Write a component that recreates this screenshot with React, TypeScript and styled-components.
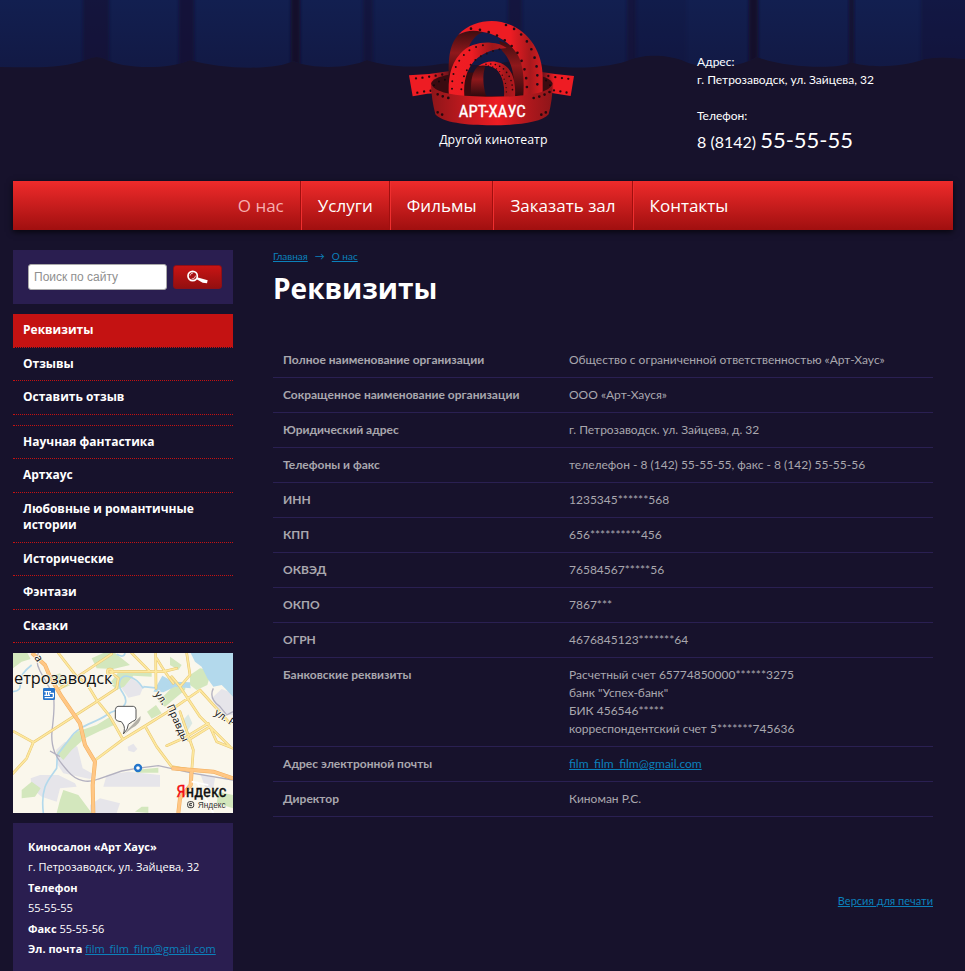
import React from "react";
import styled, { createGlobalStyle, css } from "styled-components";

const openSans = `"Open Sans", "Noto Sans", sans-serif`;
const lato = `Lato, "Open Sans", sans-serif`;
const narrow = `"Liberation Sans Narrow", "Roboto Condensed", "Liberation Sans", sans-serif`;

const GlobalStyle = createGlobalStyle`
  * { box-sizing: border-box; }
  body {
    margin: 0;
    background: #17122c;
    color: #fff;
    font-family: ${lato};
    font-size: 12px;
    line-height: 18px;
  }
`;

const Page = styled.div`
  display: flex;
  flex-direction: column;
`;

const Header = styled.header`
  display: grid;
  min-height: 181px;
`;

const CurtainArt = styled.svg`
  grid-area: 1 / 1;
  display: block;
  width: 100%;
  height: 72px;
`;

const HeaderInner = styled.div`
  grid-area: 1 / 1;
  display: grid;
  grid-template-columns: minmax(0, 387fr) 190px minmax(0, 363fr);
  padding: 0 12px 0 13px;
`;

const LogoLink = styled.a`
  grid-column: 2;
  padding-top: 10px;
`;

const LogoArt = styled.svg`
  display: block;
  width: 190px;
  height: 145px;
`;

const Contacts = styled.address`
  grid-column: 3;
  padding: 53px 0 0 107px;
  font-style: normal;
`;

const ContactBlock = styled.p`
  margin: 0 0 18px;
`;

const Phone = styled.span`
  display: block;
  font-size: 16px;
  line-height: 30px;
`;

const PhoneNumber = styled.span`
  font-size: 22px;
`;

const Nav = styled.nav`
  display: flex;
  justify-content: center;
  margin: 0 12px 0 13px;
  height: 49px;
  background: linear-gradient(#ef2b2b, #a00f0f);
  box-shadow: 0 2px 6px rgba(0, 0, 0, 0.7);
`;

const NavLink = styled.a<{ $current?: boolean }>`
  padding: 0 16px;
  color: ${(p) => (p.$current ? "#f7b0b0" : "#fff")};
  font-family: ${openSans};
  font-size: 17px;
  font-weight: 500;
  line-height: 50px;
  text-decoration: none;
  & + & {
    border-left: 1px solid #ef2f2f;
  }
  &:not(:last-child) {
    border-right: 1px solid #a00f0f;
  }
`;

const Columns = styled.div`
  display: grid;
  grid-template-columns: 220px minmax(0, 1fr);
  column-gap: 40px;
  padding: 20px 32px 0 13px;
`;

const Sidebar = styled.aside`
  display: flex;
  flex-direction: column;
  gap: 10px;
`;

const SearchForm = styled.form`
  display: flex;
  align-items: center;
  gap: 6px;
  height: 54px;
  padding: 0 11px 0 15px;
  background: #2a1e50;
`;

const SearchInput = styled.input`
  flex: 1;
  min-width: 0;
  height: 26px;
  padding: 0 5px;
  border: 1px solid #a9a9a9;
  border-radius: 3px;
  background: #fff;
  color: #333;
  font-family: "Liberation Sans", Arial, sans-serif;
  font-size: 12px;
  &::placeholder {
    color: #8f8f8f;
    opacity: 1;
  }
`;

const SearchButton = styled.button`
  display: flex;
  align-items: center;
  justify-content: center;
  width: 49px;
  height: 24px;
  padding: 0;
  border: 1px solid #8d0f18;
  border-radius: 3px;
  background: linear-gradient(#c81414, #930f10);
`;

const Menu = styled.ul<{ $ruled?: boolean }>`
  margin: 0;
  padding: 0;
  list-style: none;
  ${(p) =>
    p.$ruled &&
    css`
      border-top: 1px dotted #c41212;
    `}
`;

const MenuLink = styled.a<{ $current?: boolean }>`
  display: block;
  padding: 8px 10px;
  border-bottom: 1px dotted #c41212;
  background: ${(p) => (p.$current ? "#c41212" : "transparent")};
  background-clip: padding-box;
  color: #fff;
  font-family: ${openSans};
  font-size: 12px;
  font-weight: 700;
  line-height: 1.375;
  text-decoration: none;
`;

const MapArt = styled.svg`
  display: block;
  width: 220px;
  height: 160px;
`;

const InfoCard = styled.div`
  min-height: 148px;
  padding: 14px 15px 12px;
  background: #2a1e50;
  font-family: ${openSans};
  font-size: 11px;
`;

const InfoLine = styled.p`
  margin: 0;
  line-height: 1.86;
  white-space: nowrap;
`;

const Link = styled.a`
  color: #0b80bb;
  text-decoration: underline;
`;

const Content = styled.main`
  display: flex;
  flex-direction: column;
`;

const Breadcrumbs = styled.nav`
  display: flex;
  gap: 7px;
  color: #0b80bb;
  font-size: 10px;
  line-height: 12px;
`;

const Title = styled.h1`
  margin: 6px 0 35px;
  font-family: ${openSans};
  font-size: 28px;
  font-weight: 700;
  line-height: 40px;
`;

const Details = styled.table`
  width: 100%;
  border-collapse: collapse;
  table-layout: fixed;
  color: #a9a7ae;
  th,
  td {
    padding: 8px 10px;
    border-bottom: 1px solid #2a2052;
    text-align: left;
    vertical-align: top;
    white-space: pre-line;
  }
  th {
    width: 286px;
    font-weight: 700;
  }
`;

const PrintRow = styled.div`
  display: flex;
  justify-content: flex-end;
  margin-top: 75px;
  font-size: 11px;
`;

const folds: [number, number, string, number][] = [
  [83, 26, "#15112f", 0.55],
  [179, 15, "#15112f", 0.65],
  [291, 9, "#120e28", 0.85],
  [363, 10, "#15112f", 0.45],
  [508, 14, "#15112f", 0.5],
  [627, 9, "#15112f", 0.5],
  [636, 50, "#15112f", 0.12],
  [749, 9, "#120e28", 0.85],
  [849, 5, "#120e28", 0.7],
  [921, 48, "#15112f", 0.35],
];

function Curtain() {
  return (
    <CurtainArt viewBox="0 0 965 72" preserveAspectRatio="none" aria-hidden="true">
      <defs>
        <linearGradient id="cloth" x1="0" y1="0" x2="0" y2="1">
          <stop offset="0" stopColor="#121f50" />
          <stop offset="1" stopColor="#121944" />
        </linearGradient>
        <filter id="soft" x="-40%" width="180%">
          <feGaussianBlur stdDeviation="1.5 0" />
        </filter>
        <clipPath id="hem">
          <path d="M0 0H965V59Q940 56 925 59C900 68 865 68 851 62C840 70 785 68 757 57C735 70 700 68 686 62C665 53 640 55 627 61C600 70 560 68 545 65C530 60 515 60 500 63C470 68 460 62 440 64C410 69 385 66 367 60C350 68 315 70 293 61C275 71 220 69 190 60C165 71 120 68 105 59Q97 55 88 59C60 70 30 67 0 67Z" />
        </clipPath>
      </defs>
      <g clipPath="url(#hem)">
        <rect width="965" height="72" fill="url(#cloth)" />
        {folds.map(([x, w, fill, opacity]) => (
          <rect key={x} x={x} y="-4" width={w} height="80" fill={fill} opacity={opacity} filter="url(#soft)" />
        ))}
      </g>
    </CurtainArt>
  );
}

function Logo() {
  return (
    <LogoArt viewBox="0 0 570 435" role="img" aria-label="Арт-Хаус. Другой кинотеатр">
      <defs>
        <linearGradient id="shade" x1="0" y1="0" x2="0" y2="1">
          <stop offset="0" stopColor="#3d0d10" />
          <stop offset=".45" stopColor="#8f181b" />
          <stop offset="1" stopColor="#320a0e" />
        </linearGradient>
        <linearGradient id="big" x1="0" x2="1">
          <stop offset="0" stopColor="#ee1c23" />
          <stop offset=".62" stopColor="#ee1c23" />
          <stop offset=".85" stopColor="#a8181c" />
          <stop offset="1" stopColor="#d81c22" />
        </linearGradient>
        <linearGradient id="mid" x1="0" x2="1">
          <stop offset="0" stopColor="#f01d24" />
          <stop offset=".4" stopColor="#ee1c23" />
          <stop offset=".75" stopColor="#9d171b" />
          <stop offset="1" stopColor="#b5191e" />
        </linearGradient>
        <linearGradient id="band" x1="0" x2="1">
          <stop offset="0" stopColor="#8d1519" />
          <stop offset=".28" stopColor="#c0191e" />
          <stop offset=".55" stopColor="#ee1c23" />
          <stop offset=".78" stopColor="#b3181d" />
          <stop offset="1" stopColor="#8d1519" />
        </linearGradient>
        <linearGradient id="wingL" x1="0" x2="1">
          <stop offset=".5" stopColor="#ee1c23" />
          <stop offset="1" stopColor="#65121a" />
        </linearGradient>
        <linearGradient id="wingR" x1="0" x2="1">
          <stop offset="0" stopColor="#65121a" />
          <stop offset=".4" stopColor="#ee1c23" />
        </linearGradient>
      </defs>
      <path d="M27 196Q90 194 150 183V250Q100 245 38 259Z" fill="url(#wingL)" />
      <path d="M425 186Q470 194 522 198L512 258Q470 252 425 244Z" fill="url(#wingR)" />
      <path d="M93 222C97 196 170 187 275 187S453 196 458 222C450 252 370 266 275 266S103 254 93 222Z" fill="#3a0b10" />
      <path d="M258 258C240 225 240 190 258 170C290 165 316 200 312 258Z" fill="#17122c" />
      <path d="M147 210C143 135 152 100 175 74C200 60 228 60 250 66C228 74 212 92 204 118L160 200Z" fill="url(#shade)" />
      <path d="M298 92L306 122C328 145 344 175 345 258H372V180L352 125Q330 100 298 92Z" fill="url(#shade)" />
      <path d="M175 74C203 45 240 33 275 33C372 36 428 115 428 200V258H370C373 205 370 160 350 130C328 95 285 70 245 65C218 60 198 62 175 74Z" fill="url(#big)" />
      <path d="M147 260C143 210 150 165 180 132C205 104 240 96 272 98C292 99 308 104 320 114C290 117 252 122 222 154C200 180 190 212 193 260Z" fill="url(#mid)" />
      <path d="M213 258C213 224 211 193 232 170Q242 164 256 169C246 195 250 230 258 258Z" fill="url(#shade)" />
      <path d="M235 168C252 154 280 150 302 159C338 174 348 215 345 260H312C316 215 301 176 270 169Q250 165 235 168Z" fill="url(#mid)" />
      <g fill="none" stroke="#26090f" strokeWidth="8" strokeLinecap="round">
        <path d="M318 45C375 65 408 125 412 190V240" strokeDasharray="0 27" stroke="#1a0c18" />
        <path d="M213 56C275 60 325 90 352 128C373 162 380 195 381 240" strokeDasharray="0 27" />
        <path d="M156 236C155 190 170 150 203 125Q225 106 265 104" strokeDasharray="0 22" strokeWidth="6" />
        <path d="M184 238C186 195 208 160 240 140Q270 124 308 115" strokeDasharray="0 20" strokeWidth="6" />
        <path d="M258 163Q300 157 322 190Q340 215 337 250" strokeDasharray="0 14" strokeWidth="5" />
        <path d="M265 168Q294 171 308 198Q320 220 319 250" strokeDasharray="0 13" strokeWidth="4" />
        <path d="M48 205Q90 201 140 191" strokeDasharray="0 20" strokeWidth="7" />
        <path d="M52 248Q75 243 96 242" strokeDasharray="0 20" strokeWidth="7" />
        <path d="M445 198Q480 204 510 207" strokeDasharray="0 20" strokeWidth="7" />
        <path d="M462 241Q485 244 506 249" strokeDasharray="0 19" strokeWidth="7" />
        <path d="M102 226Q108 214 145 207M450 226Q445 214 430 207" strokeDasharray="0 19" strokeWidth="6" stroke="#16060b" />
      </g>
      <path d="M93 222C106 252 180 260 275 260S447 252 458 222C458 255 453 285 446 313C425 338 350 346 275 346S126 338 106 313C98 280 94 255 93 222Z" fill="url(#band)" />
      <g fill="none" stroke="#24090e" strokeWidth="8" strokeLinecap="round">
        <path d="M113 253Q130 261 151 265M401 264Q430 258 450 245" strokeDasharray="0 17" />
        <path d="M113 307L127 314M424 314L438 307" strokeDasharray="0 15" />
      </g>
      <text x="277" y="322" textAnchor="middle" fill="#fff" stroke="#fff" strokeWidth="1" fontFamily={narrow} fontSize="50">АРТ-ХАУС</text>
      <text x="280" y="402" textAnchor="middle" fill="#fff" fontFamily={`"Open Sans", sans-serif`} fontSize="37">Другой кинотеатр</text>
    </LogoArt>
  );
}

function MagnifierIcon() {
  return (
    <svg width="21" height="14" viewBox="0 0 63 42" aria-hidden="true">
      <circle cx="17" cy="18" r="14" fill="#a91215" stroke="#fff" strokeWidth="5" />
      <path d="M9 17Q11 9 18 9M14 27Q24 27 26 17" fill="none" stroke="#fff" strokeWidth="3" opacity=".7" />
      <path d="M30 22L62 31L60 40L47 38L29 28Z" fill="#fff" />
    </svg>
  );
}

function CityMap() {
  const water = "#b3d9ec";
  const green = "#d3e7bd";
  const grey = "#e6e5ea";
  return (
    <MapArt viewBox="39 24 660 480" role="img" aria-label="Карта проезда">
      <rect x="39" y="24" width="660" height="480" fill="#faf7ec" />
      <g fill={grey}>
        <path d="M365 130L395 100L430 125L420 150L385 158Z" />
        <path d="M168 315L195 290L232 305L248 370L285 390L270 402L190 385L170 355Z" />
        <path d="M92 400L120 390L175 390L225 415L230 425L180 430L170 470L125 455L95 430Z" />
        <path d="M320 390L385 380L480 390L480 425L310 425Z" />
        <path d="M635 160L665 132L699 145V210H665Z" />
        <path d="M300 460L360 475L350 504H270V480Z" />
        <path d="M383 305L400 296L412 312L402 322L385 317ZM600 385L645 400L640 430L615 425Z" />
      </g>
      <g fill={green}>
        <path d="M39 24H82L92 42L65 50L39 70ZM150 95L180 85L212 120L190 130L170 115Z" />
        <path d="M275 40L310 24H345L390 60L340 72L290 70ZM360 75H455V95L400 92L372 125L350 135L330 115Z" />
        <path d="M475 170L515 128L560 110L555 135L495 185ZM510 35L545 60L535 75L510 60Z" />
        <path d="M570 90L600 70L635 75L622 120L590 135L570 120Z" />
        <path d="M190 300L230 260L290 240L330 215L342 240L300 258L255 280L215 315L190 345L170 325Z" />
        <path d="M441 200L468 180L485 205L455 221Z" />
        <path d="M65 435L95 410L122 430L105 455L65 460ZM190 435L235 450L275 504H170L180 465Z" />
        <path d="M405 375L475 368V383H410ZM655 440L699 450V490L650 475ZM405 500L425 485H445V504Z" />
      </g>
      <path d="M572 24H699V155L675 130L665 120L640 125L622 100L605 65L585 50Z" fill={water} />
      <path d="M487 92L520 110L570 112L572 130L525 125L490 142L460 140Z" fill={water} />
      <path d="M430 125L480 130L510 120M375 24Q372 40 350 28M430 130C405 90 360 80 358 115C355 140 385 150 376 175C365 200 345 190 320 210C285 235 235 240 210 280L172 330L170 370C150 400 120 420 130 504M39 140Q65 138 60 115T95 60" fill="none" stroke={water} strokeWidth="5" />
      <path d="M115 24Q105 50 120 78L160 150Q165 180 158 240C145 320 180 350 205 380C230 410 265 415 295 402L365 378L410 370L475 362L580 385L699 405M640 130Q625 160 660 185L680 210L699 200M150 318L180 335" fill="none" stroke="#b3b1c0" strokeWidth="4" />
      <path d="M545 230L565 208L577 235L560 262Z" fill="#dae8e3" />
      <g fill="none" strokeLinejoin="round" strokeLinecap="round">
        {[{ c: "#e8c66f", w: 8 }, { c: "#fde89f", w: 5 }].map((s) => (
          <g key={s.c} stroke={s.c} strokeWidth={s.w}>
            <path d="M175 24L230 95L260 115L290 165L330 215L368 282M335 27L180 130M330 80L355 100L350 130L290 170L240 202L100 292L42 260M100 292L80 340L39 385M330 80H490L530 70M395 24L450 80M467 24L468 130M290 342L368 284L435 243L520 190L600 135L690 235M435 243L470 305L515 365L575 375M540 125L570 90L560 24M515 95L540 125L600 215L690 305M625 235L560 275L500 302M565 285L630 245L650 290L699 310M470 40Q500 90 520 115M540 200L580 315L575 380" />
            <circle cx="330" cy="80" r="8" />
          </g>
        ))}
      </g>
      <g fill="none" strokeLinejoin="round">
        {[{ c: "#f2ae5c", w: 12 }, { c: "#ffc785", w: 9 }].map((s) => (
          <path key={s.c} stroke={s.c} strokeWidth={s.w} d="M96 24L135 60L150 95L185 155L240 235L255 300L285 350L278 420L280 504M515 370L640 380L699 400M575 375L572 420L540 460L535 504" />
        ))}
      </g>
      <path d="M575 410L625 420M590 410L640 504" stroke="#fff" strokeWidth="5" />
      <g fontFamily={openSans} fill="#111" stroke="#faf7ec" strokeWidth="5" paintOrder="stroke">
        <text x="42" y="118" fontSize="49">етрозаводск</text>
        <text x="0" y="0" fontSize="33" transform="translate(102 38) rotate(55)">а</text>
        <text fontSize="31" transform="translate(463 148) rotate(53)">ул.</text>
        <text fontSize="31" transform="translate(500 184) rotate(66)">Правды</text>
        <text fontSize="31" transform="translate(641 208) rotate(33)">ул. Р</text>
      </g>
      <rect x="129" y="129" width="36" height="36" rx="4" fill="#2574cc" />
      <path d="M133 140H153M139 140V150M146 140V150M133 151H150M150 145H160V157M134 158H160" fill="none" stroke="#fff" strokeWidth="4" />
      <path d="M385 252L422 213Q424 235 395 250L373 268Z" fill="#77756d" opacity=".55" />
      <path d="M354 184H400Q408 185 408 194V220Q407 228 398 229L385 238Q385 252 370 267Q377 248 369 237L364 230Q348 229 346 220V194Q347 185 354 184Z" fill="#fff" stroke="#555" strokeWidth="3" />
      <circle cx="414" cy="369" r="9" fill="#fff" stroke="#2375ca" strokeWidth="7" />
      <text x="529" y="456" fontFamily={narrow} fontSize="50" fill="#111" stroke="#111" strokeWidth="1"><tspan fill="#f20f12" stroke="#f20f12">Я</tspan>ндекс</text>
      <text x="593" y="489" fontFamily={`"Liberation Sans", sans-serif`} fontSize="25" fill="#333">Яндекс</text>
      <rect x="563" y="470" width="18" height="18" rx="6" fill="#faf7ec" stroke="#333" strokeWidth="3" />
      <path d="M576 476H569V482H576" fill="none" stroke="#333" strokeWidth="3" />
    </MapArt>
  );
}

const navItems = ["О нас", "Услуги", "Фильмы", "Заказать зал", "Контакты"];
const aboutMenu = ["Реквизиты", "Отзывы", "Оставить отзыв"];
const genreMenu = ["Научная фантастика", "Артхаус", "Любовные и романтичные истории", "Исторические", "Фэнтази", "Сказки"];
const email = "film_film_film@gmail.com";

const rows: [string, React.ReactNode][] = [
  ["Полное наименование организации", "Общество с ограниченной ответственностью «Арт-Хаус»"],
  ["Сокращенное наименование организации", "ООО «Арт-Хауся»"],
  ["Юридический адрес", "г. Петрозаводск. ул. Зайцева, д. 32"],
  ["Телефоны и факс", "телелефон - 8 (142) 55-55-55, факс - 8 (142) 55-55-56"],
  ["ИНН", "1235345******568"],
  ["КПП", "656**********456"],
  ["ОКВЭД", "76584567*****56"],
  ["ОКПО", "7867***"],
  ["ОГРН", "4676845123*******64"],
  ["Банковские реквизиты", "Расчетный счет 65774850000******3275\nбанк \"Успех-банк\"\nБИК 456546*****\nкорреспондентский счет 5*******745636"],
  ["Адрес электронной почты", <Link href={`mailto:${email}`}>{email}</Link>],
  ["Директор", "Киноман Р.С."],
];

export default function App() {
  return (
    <Page>
      <GlobalStyle />
      <Header>
        <Curtain />
        <HeaderInner>
          <LogoLink href="#home">
            <Logo />
          </LogoLink>
          <Contacts>
            <ContactBlock>
              Адрес:
              <br />
              г. Петрозаводск, ул. Зайцева, 32
            </ContactBlock>
            <ContactBlock>
              Телефон:
              <Phone>
                8 (8142) <PhoneNumber>55-55-55</PhoneNumber>
              </Phone>
            </ContactBlock>
          </Contacts>
        </HeaderInner>
      </Header>
      <Nav>
        {navItems.map((item, i) => (
          <NavLink key={item} href="#section" $current={i === 0}>
            {item}
          </NavLink>
        ))}
      </Nav>
      <Columns>
        <Sidebar>
          <SearchForm onSubmit={(e) => e.preventDefault()}>
            <SearchInput type="text" placeholder="Поиск по сайту" aria-label="Поиск по сайту" />
            <SearchButton type="submit" aria-label="Найти">
              <MagnifierIcon />
            </SearchButton>
          </SearchForm>
          <Menu>
            {aboutMenu.map((item, i) => (
              <li key={item}>
                <MenuLink href="#page" $current={i === 0}>{item}</MenuLink>
              </li>
            ))}
          </Menu>
          <Menu $ruled>
            {genreMenu.map((item) => (
              <li key={item}>
                <MenuLink href="#genre">{item}</MenuLink>
              </li>
            ))}
          </Menu>
          <CityMap />
          <InfoCard>
            <InfoLine><b>Киносалон «Арт Хаус»</b></InfoLine>
            <InfoLine>г. Петрозаводск, ул. Зайцева, 32</InfoLine>
            <InfoLine><b>Телефон</b></InfoLine>
            <InfoLine>55-55-55</InfoLine>
            <InfoLine><b>Факс</b> 55-55-56</InfoLine>
            <InfoLine><b>Эл. почта</b> <Link href={`mailto:${email}`}>{email}</Link></InfoLine>
          </InfoCard>
        </Sidebar>
        <Content>
          <Breadcrumbs aria-label="Навигация">
            <Link href="#home">Главная</Link>
            <span>→</span>
            <Link href="#about">О нас</Link>
          </Breadcrumbs>
          <Title>Реквизиты</Title>
          <Details>
            <tbody>
              {rows.map(([name, value]) => (
                <tr key={name}>
                  <th scope="row">{name}</th>
                  <td>{value}</td>
                </tr>
              ))}
            </tbody>
          </Details>
          <PrintRow>
            <Link href="#print">Версия для печати</Link>
          </PrintRow>
        </Content>
      </Columns>
    </Page>
  );
}
